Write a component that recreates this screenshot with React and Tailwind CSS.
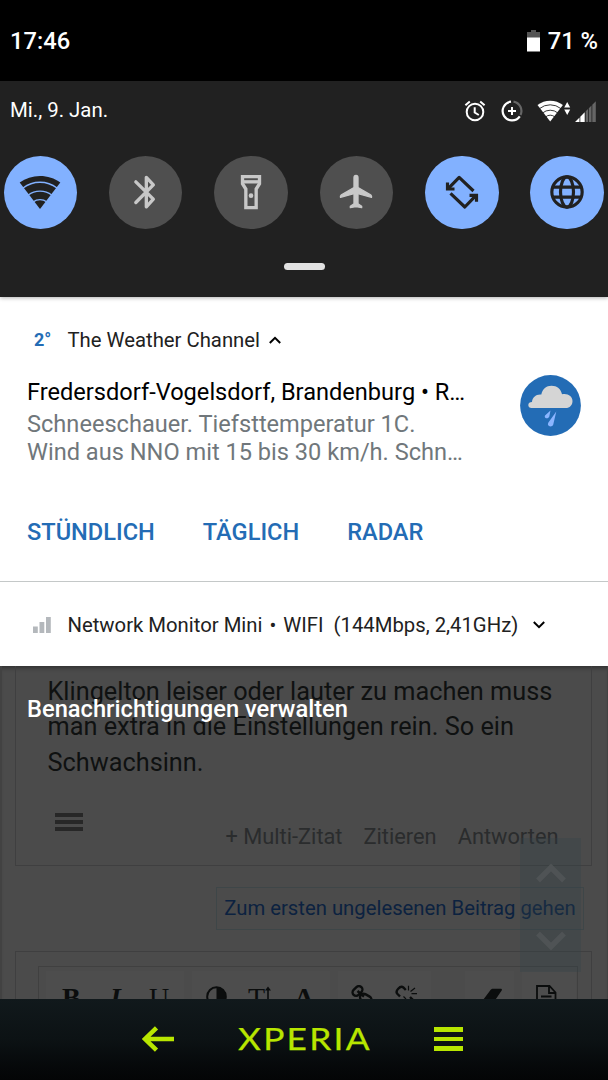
import clsx from 'clsx';

const WifiIcon = () => (
  <svg viewBox="0 0 48 48" className="w-12 h-12">
    <path d="M24 41L3.7 14.5C9.500 10.300 16.500 8 24 8s14.500 2.300 20.300 6.500z" fill="#212121" />
    <g fill="none" stroke="#82b1ff" strokeWidth="1.3">
      <path d="M7 20a28 28 0 0 1 34 0" />
      <path d="M12 27.200a20 20 0 0 1 24 0" />
      <path d="M17 34a12 12 0 0 1 14 0" />
    </g>
  </svg>
);

const BluetoothIcon = () => (
  <svg viewBox="0 0 24 24" className="w-10 h-10" fill="none" stroke="#c8c8c8" strokeWidth="2" strokeLinecap="round" strokeLinejoin="round">
    <path d="M5.900 5.900L16.400 16.300L12.200 20.900V3.200L16.400 7.700L5.900 18.300" />
  </svg>
);

const FlashlightIcon = () => (
  <svg viewBox="0 0 24 24" className="w-10 h-10" fill="none" stroke="#c8c8c8" strokeWidth="2">
    <path d="M6.900 2.800H17.100V7L15.100 10.200V21.400H8.900V10.200L6.900 7z" />
    <path d="M6.900 5.900H17.100" />
    <circle cx="12" cy="14.200" r="1.400" fill="#c8c8c8" stroke="none" />
  </svg>
);

const PlaneIcon = () => (
  <svg viewBox="0 0 24 24" className="w-10 h-10" fill="#c8c8c8" stroke="#c8c8c8" strokeWidth=".8" strokeLinejoin="round">
    <path d="M12 2c-.8 0-1.200.6-1.200 1.400V9.300L3 13.900c-.4.300-.4.900-.3 1.300L10.800 13v6l-2.200 1.600v.8L12 20.700l3.400.7v-.8L13.200 19v-6l8.100 2.200c.1-.4.100-1-.3-1.300L13.200 9.300V3.400C13.200 2.600 12.800 2 12 2z" />
  </svg>
);

const RotateIcon = () => (
  <svg viewBox="0 0 24 24" className="w-10 h-10" fill="none" stroke="#212121" strokeWidth="1.900" strokeLinejoin="round">
    <path d="M18.900 11.400L10.300 3.200L4 9.700" />
    <path d="M5.100 12.800L13.700 21L20 14.500" />
    <path d="M3.300 6.300V10.200H7.500M20.700 17.900V14H16.500" strokeLinejoin="miter" />
  </svg>
);

const GlobeIcon = () => (
  <svg viewBox="0 0 24 24" className="w-10 h-10" fill="none" stroke="#212121" strokeWidth="1.900">
    <circle cx="12" cy="12" r="9.100" />
    <ellipse cx="12" cy="12" rx="3.900" ry="9.100" />
    <path d="M3.600 9.100H20.400M3.600 15.100H20.400" />
  </svg>
);

const tiles = [
  { id: 'wifi', active: true, Icon: WifiIcon },
  { id: 'bluetooth', active: false, Icon: BluetoothIcon },
  { id: 'flashlight', active: false, Icon: FlashlightIcon },
  { id: 'airplane', active: false, Icon: PlaneIcon },
  { id: 'rotate', active: true, Icon: RotateIcon },
  { id: 'data', active: true, Icon: GlobeIcon },
];

function StatusBar() {
  return (
    <div className="h-[81px] bg-black text-white flex items-center justify-between pl-[10px] pr-[10px] pt-[3px] font-medium text-[23.700px]">
      <span>17:46</span>
      <div className="flex items-center gap-[8px]">
        <svg viewBox="0 0 13 22" className="w-[13px] h-[22px] -mt-[2px]">
          <path d="M4 0h5v2h4v6H0V2h4z" fill="#555" />
          <path d="M0 7.500h13V21.500H0z" fill="#fff" />
        </svg>
        <span>71 %</span>
      </div>
    </div>
  );
}

function StatusIcons() {
  return (
    <div className="flex items-center mt-[2px]">
      {/* alarm */}
      <svg viewBox="0 0 22 22" className="w-[22px] h-[22px]" fill="none" stroke="#fff" strokeWidth="2">
        <circle cx="11" cy="12" r="8.300" />
        <path d="M10.700 7.200V12.500L14.800 15M1.400 5.300L5.800 1.500M20.600 5.300L16.200 1.500" />
      </svg>
      {/* data saver */}
      <svg viewBox="0 0 22 22" className="w-[22px] h-[22px] ml-[15px]" fill="none" strokeWidth="2.200">
        <path d="M12.500 1.700A9.400 9.400 0 0 1 19.500 15" stroke="#666" />
        <path d="M10 1.700A9.400 9.400 0 1 0 18.800 16.400" stroke="#fff" />
        <path d="M11 7V15M7 11H15" stroke="#fff" strokeWidth="2" />
      </svg>
      {/* wifi with traffic arrows */}
      <svg viewBox="0 0 34 22" className="w-[34px] h-[22px] ml-[14px]">
        <path d="M13.200 21.500L.5 5.100C4.300 2.200 8.500.7 13.200.7s8.900 1.500 12.700 4.400z" fill="#fff" />
        <g fill="none" stroke="#212121" strokeWidth=".9">
          <path d="M2.500 8.600a17 17 0 0 1 21.400 0" />
          <path d="M5.500 13a12 12 0 0 1 15.400 0" />
          <path d="M8.500 17a7 7 0 0 1 9.400 0" />
        </g>
        <path d="M27.200 7.500L30.200 2L33.200 7.500zM27.200 9.500H33.200L30.200 15z" fill="#fff" />
      </svg>
      {/* mobile signal */}
      <svg viewBox="0 0 21 21" className="w-[21px] h-[21px] ml-[4px]">
        <path d="M0 21L4.500 16.500V21zM5.300 15.700L9.700 11.300V21H5.300z" fill="#fff" />
        <path d="M10.700 10.300L13 8V21H10.700zM13.800 7.200L16.500 4.500V21H13.800zM17.300 3.700L20.800.2V21H17.300z" fill="#666" />
      </svg>
    </div>
  );
}

function QuickSettings() {
  return (
    <div className="relative z-10 h-[216px] bg-[#212121] shadow-[0_1px_4px_rgba(0,0,0,0.3)]">
      <div className="h-[58px] flex items-center justify-between pl-[10px] pr-[12.500px] text-white">
        <span className="text-[20.400px]">Mi., 9. Jan.</span>
        <StatusIcons />
      </div>
      <div className="flex justify-between pl-[3.500px] pr-[4px] mt-[16.500px]">
        {tiles.map(({ id, active, Icon }) => (
          <div
            key={id}
            className={clsx(
              'w-[73.500px] h-[73.500px] rounded-full flex items-center justify-center',
              active ? 'bg-[#82b1ff]' : 'bg-[#4f4f4f]'
            )}
          >
            <Icon />
          </div>
        ))}
      </div>
      <div className="w-[41px] h-[7px] rounded-full bg-[#e2e2e2] mx-auto mt-[34px]" />
    </div>
  );
}

function WeatherNotification() {
  return (
    <div className="h-[285px] bg-white border-b border-[#c4c8c8] pt-[28px]">
      <div className="h-[30px] flex items-center pl-[34px] text-[20.300px] text-[#212121]">
        <span className="w-[33.500px] text-[18px] leading-[26px] font-bold text-[#236cb5]">2°</span>
        <span>The Weather Channel</span>
        <svg viewBox="0 0 12 8" className="w-[12px] h-[8px] ml-[9.500px]" fill="none" stroke="#000" strokeWidth="2">
          <path d="M.8 7L6 1.800L11.200 7" />
        </svg>
      </div>
      <div className="flex justify-between pl-[27px] pr-[27px] mt-[20px]">
        <div className="text-[23.600px] leading-[28px] text-[#70777b]">
          <div className="leading-[34px] text-black">Fredersdorf-Vogelsdorf, Brandenburg • R…</div>
          <div className="mt-px">Schneeschauer. Tiefsttemperatur 1C.</div>
          <div>Wind aus NNO mit 15 bis 30 km/h. Schn…</div>
        </div>
        <svg viewBox="0 0 61 61" className="w-[61px] h-[61px]">
          <circle cx="30.500" cy="30.500" r="30.400" fill="#236cb5" />
          <path
            d="M11.500 33C9.600 33 8.300 31.700 8.300 30C8.300 28.200 9.800 27 12 27C12.300 22.300 16 19 21.300 19.500C22.500 14 26.300 10.700 31.500 10.700C37 10.700 41 14 42 19.200C48 18 52.500 21.500 52.500 26C52.500 30.300 49.700 33 45.800 33z"
            fill="#d5d5d5"
          />
          <path d="M30.500 35.600L29.300 41.600C28.700 43.300 26.800 43.800 25.500 42.900C24.500 42.200 24.600 41 25.300 40.300zM36.300 36.500L33.200 49.800C32.400 51.700 30.200 51.800 29 51C27.700 50.200 27.700 48.700 28.400 47.500z" fill="#8bb5ff" />
        </svg>
      </div>
      <div className="flex gap-[48px] pl-[27px] mt-[47.500px] text-[23.600px] leading-[36px] font-medium text-[#236cb5]">
        <span>STÜNDLICH</span>
        <span>TÄGLICH</span>
        <span>RADAR</span>
      </div>
    </div>
  );
}

function NetworkNotification() {
  return (
    <div className="h-[84px] bg-white flex items-center pl-[33px] pt-[2px] text-[20.300px] text-[#212121]">
      <svg viewBox="0 0 18 16" className="w-[18px] h-[16px] mr-[16.500px]" fill="#b4b8bc">
        <path d="M0 9.500H4.800V16H0zM6.500 5H11.300V16H6.500zM13 0H17.800V16H13z" />
      </svg>
      <span>Network Monitor Mini</span>
      <span className="mx-[7px]">•</span>
      <span className="whitespace-pre">WIFI  (144Mbps, 2,41GHz)</span>
      <svg viewBox="0 0 12 8" className="w-[12px] h-[8px] ml-[14.500px]" fill="none" stroke="#000" strokeWidth="2">
        <path d="M.8 1L6 6.200L11.200 1" />
      </svg>
    </div>
  );
}

function EditorToolbar() {
  return (
    <div className="h-[48px] ml-[22px] mr-[13px] mt-[14px] border border-[#404040] pt-[4px] pl-[7px] flex gap-[8px] font-['Liberation_Serif',serif] text-[#0b0d0d]">
      <div className="w-[138px] h-[44px] bg-[#4d4d4d] flex pt-[12px] pl-[16px] text-[28px] leading-[30px]">
        <b className="w-[48px]">B</b>
        <i className="w-[39px] font-bold">I</i>
        <span>U</span>
      </div>
      <div className="w-[138px] h-[44px] bg-[#4d4d4d] flex items-start pt-[15px] pl-[14px]">
        <svg viewBox="0 0 21 21" className="w-[21px] h-[21px]">
          <circle cx="10.500" cy="10.500" r="9.300" fill="none" stroke="#0b0d0d" strokeWidth="2" />
          <path d="M10.500 1a9.500 9.500 0 0 1 0 19z" fill="#0b0d0d" />
        </svg>
        <span className="text-[28px] leading-[30px] -mt-[3px] ml-[21px]">T</span>
        <svg viewBox="0 0 6 20" className="w-[6px] h-[20px]">
          <path d="M0 4.500L3 .5L6 4.500zM2.200 4H3.800V20H2.200z" fill="#0b0d0d" />
        </svg>
        <span className="text-[28px] leading-[30px] -mt-[3px] ml-[23px] font-bold">A</span>
      </div>
      <div className="w-[93px] h-[44px] bg-[#4d4d4d] flex items-start justify-between pt-[14px] pl-[13px] pr-[14px]">
        <svg viewBox="0 0 22 22" className="w-[22px] h-[22px]" fill="none" stroke="#0b0d0d" strokeWidth="2.400">
          <rect x="1" y="2.500" width="11" height="7" rx="3.500" transform="rotate(-45 6.500 6)" />
          <rect x="9" y="10" width="12" height="7" rx="3.500" transform="rotate(30 15 13)" />
          <path d="M6.500 6L13 11.500" />
        </svg>
        <svg viewBox="0 0 22 22" className="w-[22px] h-[22px]" fill="none" stroke="#0b0d0d" strokeWidth="2.400">
          <path d="M5 11.500L2.300 8.800C.8 7 1.500 5.500 3.200 3.700C5 1.800 6.800 1.200 8.300 2.500L10.800 5M15 12L20 17" />
          <path d="M13.500 5.500V.8M15.500 6.500L20 3M16.500 8.700H22M8.500 11.500L11 14" strokeWidth="1.200" />
        </svg>
      </div>
      <div className="w-[49px] h-[44px] ml-[26px] bg-[#4d4d4d] pt-[17px] pl-[15px]">
        <svg viewBox="0 0 24 16" className="w-[24px] h-[16px]">
          <path d="M0 16L10.500 2C11.300 1 12 .7 13 .7H20.500C22 .7 22.300 1.700 21.500 2.800L12.500 16z" fill="#0b0d0d" />
        </svg>
      </div>
      <div className="w-[54px] h-[44px] bg-[#4d4d4d] pt-[14px] pl-[14px]">
        <svg viewBox="0 0 21 24" className="w-[21px] h-[24px]" fill="none" stroke="#0b0d0d" strokeWidth="1.800">
          <path d="M1 23V1H13.500L19.500 7.500V23zM13 1V8H19.500M5 11.500H15.500" />
        </svg>
      </div>
    </div>
  );
}

// forum page behind the shade, already dimmed
function DimmedPage() {
  return (
    <div className="relative h-[333px] bg-[#4b4b4b] border-x-2 border-r-[1px] border-[#424242] overflow-hidden pl-[13px] pr-[15px] shadow-[inset_0_5px_4px_-3px_rgba(0,0,0,0.35)]">
      <div className="h-[200px] border border-t-0 border-[#3f3f40] pl-[31.500px] pr-[32.500px] pt-[7.500px]">
        <p className="text-[25.300px] leading-[35.500px] text-[#0f1111] whitespace-nowrap">
          Klingelton leiser oder lauter zu machen muss<br />
          man extra in die Einstellungen rein. So ein<br />
          Schwachsinn.
        </p>
        <div className="flex items-start justify-between pl-[7.500px] pt-[32.500px]">
          <div className="flex flex-col gap-[3px]">
            <div className="w-[28px] h-[4px] bg-[#272727]" />
            <div className="w-[28px] h-[4px] bg-[#272727]" />
            <div className="w-[28px] h-[4px] bg-[#272727]" />
          </div>
          <div className="flex gap-[21px] text-[21.800px] leading-[26px] text-[#2a2c2d] mt-[11px]">
            <span>+ Multi-Zitat</span>
            <span>Zitieren</span>
            <span>Antworten</span>
          </div>
        </div>
      </div>
      <div className="flex justify-end pr-[8px] mt-[21px]">
        <div className="w-[368px] h-[43px] border border-[#3e4648] flex items-center justify-center text-[20.300px] text-[#0c2240]">
          Zum ersten ungelesenen Beitrag gehen
        </div>
      </div>
      <div className="h-[80px] mt-[21px] border border-[#3f3f40]">
        <EditorToolbar />
      </div>

      {/* floating scroll buttons */}
      <div className="absolute left-[518px] top-[172px] w-[61px] h-[134px] bg-[#33434a]/30 flex flex-col items-center justify-between pt-[25px] pb-[21px]">
        <svg viewBox="0 0 30 20" className="w-[30px] h-[20px]" fill="none" stroke="#4f5355" strokeWidth="5.500">
          <path d="M2 17.500L15 4.500L28 17.500" />
        </svg>
        <svg viewBox="0 0 30 20" className="w-[30px] h-[20px]" fill="none" stroke="#4f5355" strokeWidth="5.500">
          <path d="M2 2.500L15 15.500L28 2.500" />
        </svg>
      </div>

      <div className="absolute left-[25px] top-[28px] text-[23.700px] leading-[30px] font-medium text-white whitespace-nowrap">
        Benachrichtigungen verwalten
      </div>
    </div>
  );
}

function NavBar() {
  return (
    <div className="h-[81px] bg-gradient-to-b from-[#11191c] via-[#0c1214] to-[#040506] flex items-center pl-[142px] pb-px">
      <svg viewBox="0 0 32 26" className="w-[32px] h-[26px]" fill="none" stroke="#b8e600" strokeWidth="4.500">
        <path d="M14.500 1.800L3 13L14.500 24.200M2.500 13H32" />
      </svg>
      <span className="w-[134px] ml-[64px] -mt-px font-['Lato',sans-serif] text-[31.500px] tracking-[2px] origin-left scale-x-[1.12] text-[#b8e600] whitespace-nowrap [-webkit-text-stroke:0.25px_#b8e600]">
        XPERIA
      </span>
      <div className="flex flex-col gap-[5.200px] ml-[62px]">
        <div className="w-[29px] h-[4.500px] bg-[#b8e600]" />
        <div className="w-[29px] h-[4.500px] bg-[#b8e600]" />
        <div className="w-[29px] h-[4.500px] bg-[#b8e600]" />
      </div>
    </div>
  );
}

export default function App() {
  return (
    <div className="w-[608px] h-[1080px] overflow-hidden bg-black font-['Roboto',sans-serif]">
      <StatusBar />
      <QuickSettings />
      <WeatherNotification />
      <NetworkNotification />
      <DimmedPage />
      <NavBar />
    </div>
  );
}
